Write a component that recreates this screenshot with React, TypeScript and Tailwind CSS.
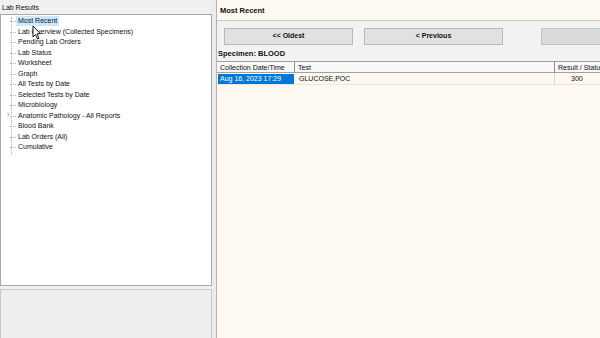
import React from 'react';

const items = [
  'Most Recent',
  'Lab Overview (Collected Specimens)',
  'Pending Lab Orders',
  'Lab Status',
  'Worksheet',
  'Graph',
  'All Tests by Date',
  'Selected Tests by Date',
  'Microbiology',
  'Anatomic Pathology - All Reports',
  'Blood Bank',
  'Lab Orders (All)',
  'Cumulative',
];

function Cursor() {
  return (
    <svg className="absolute left-[31px] top-[10px]" width="10" height="15" viewBox="0 0 10 15">
      <path d="M1 1 L1 12 L3.5 9.5 L5.5 14 L7 13.3 L5 8.8 L8.5 8.8 Z" fill="#fff" stroke="#000" strokeWidth="0.9" strokeLinejoin="round" />
    </svg>
  );
}

function Tree() {
  return (
    <div className="relative flex-1 bg-white border border-[#a9a9a9] pt-[1px]">
      <div className="absolute left-[10px] top-[2px] h-[138px] border-l border-dotted border-[#b4b4b4]" />
      <div className="flex flex-col">
        {items.map((label, i) => (
          <div key={label} className="relative flex items-center h-[10.5px] pl-[15px]">
            <div className="absolute left-[9px] top-[5px] w-[6px] border-t border-dotted border-[#b4b4b4]" />
            {i === 9 && <span className="absolute left-[6px] top-[-1px] text-[7px] text-[#777]">›</span>}
            <span className={`px-[2px] leading-[10px] ${i === 0 ? 'bg-[#cce8ff]' : ''}`}>{label}</span>
          </div>
        ))}
      </div>
      <Cursor />
    </div>
  );
}

export default function App() {
  return (
    <div className="w-[600px] h-[338px] flex bg-[#f0f0f0] text-[7px] text-[#111] overflow-hidden" style={{ fontFamily: '"Liberation Sans", Arial, sans-serif' }}>
      <aside className="w-[212px] shrink-0 flex flex-col">
        <div className="h-[14px] pl-[2px] pt-[3px] leading-[10px]">Lab Results</div>
        <Tree />
        <div className="h-[49px] mt-[3px] bg-[#eeeeee] border-x border-t border-[#c8c8c8]" />
      </aside>

      <div className="w-[4px] shrink-0 bg-[#ececec]" />

      <section className="flex-1 min-w-0 flex flex-col bg-[#fdf8f0] border-l border-[#b5b5b5]">
        <div className="h-[21px] border-b border-[#c9c9c9] px-[3px] pt-[5px] font-bold text-[7.5px]">Most Recent</div>

        <div className="bg-[#f2f2f2] pt-[7px]">
          <div className="flex h-[17px] pl-[7px] overflow-hidden">
            <div className="w-[129px] shrink-0 flex items-center justify-center bg-[#e1e1e1] border border-[#b9b9b9] font-bold">&lt;&lt; Oldest</div>
            <div className="w-[139px] shrink-0 ml-[11px] flex items-center justify-center bg-[#e1e1e1] border border-[#b9b9b9] font-bold">&lt; Previous</div>
            <div className="w-[80px] shrink-0 ml-[38px] bg-[#d9d9d9] border border-[#c2c2c2]" />
          </div>
          <div className="h-[16px] pl-[1px] pt-[3px] font-bold text-[7.5px]">Specimen: BLOOD</div>
        </div>

        <div className="flex h-[12px] items-center bg-[#f7f7f7] border-y border-[#a0a0a0] whitespace-nowrap overflow-hidden">
          <div className="w-[78px] shrink-0 pl-[3px] border-r border-[#8f8f8f] h-full leading-[11px]">Collection Date/Time</div>
          <div className="w-[260px] shrink-0 pl-[3px] border-r border-[#8f8f8f] h-full leading-[11px]">Test</div>
          <div className="flex-1 pl-[3px] h-full leading-[11px] overflow-hidden">Result / Status</div>
        </div>
        <div className="flex h-[12px] whitespace-nowrap border-b border-[#ece6dc]">
          <div className="w-[78px] shrink-0 pl-[1px] pt-[1px] pr-[1px]">
            <div className="bg-[#0078d7] text-white h-[10px] leading-[10px] pl-[2px]">Aug 16, 2023 17:29</div>
          </div>
          <div className="w-[260px] shrink-0 pl-[4px] leading-[12px] border-r border-[#dcd6cc]">GLUCOSE,POC</div>
          <div className="flex-1 leading-[12px] pl-[16px]">300</div>
        </div>
      </section>
    </div>
  );
}
